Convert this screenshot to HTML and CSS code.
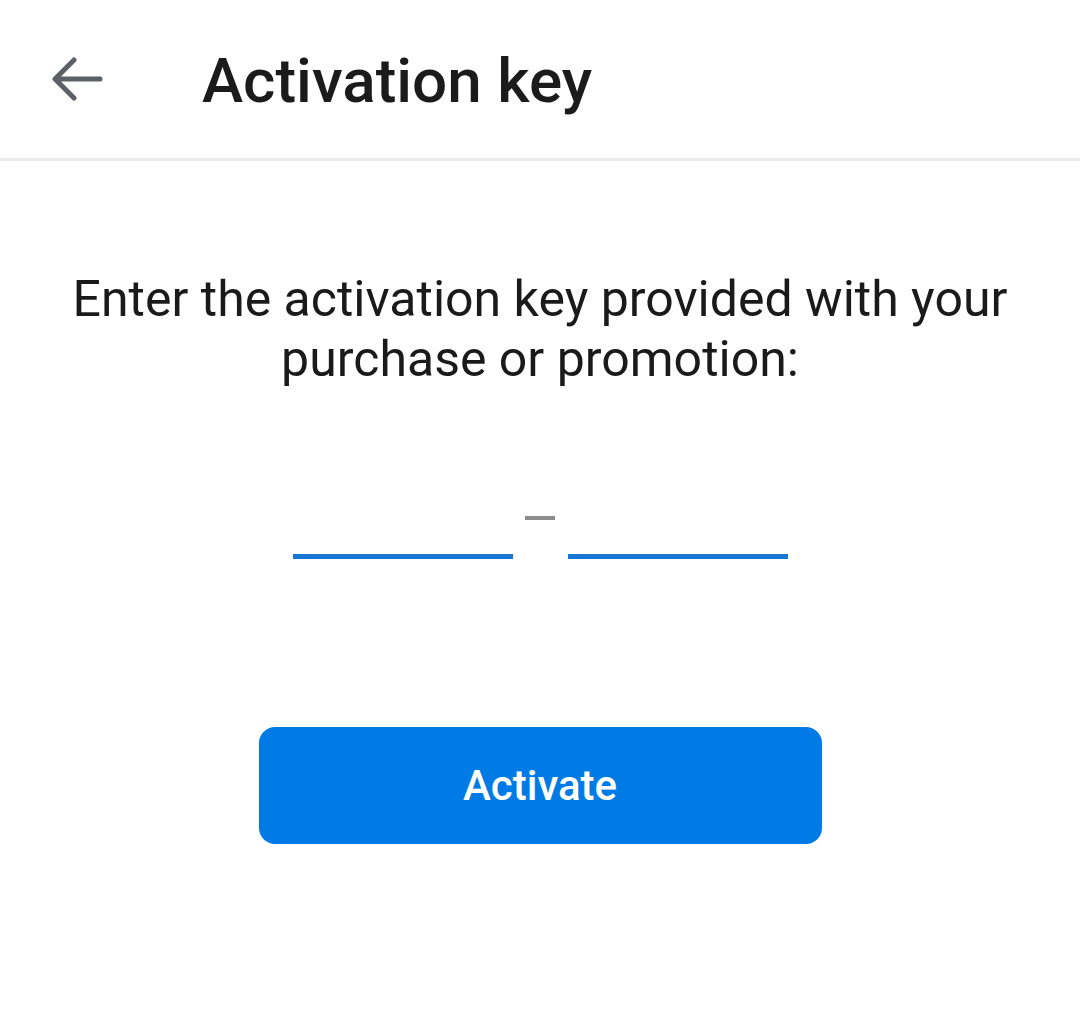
FILE: index.html
```html
<!DOCTYPE html>
<html lang="en">

<head>
  <meta charset="UTF-8" />
  <meta name="viewport" content="width=device-width, initial-scale=1.0" />
  <title>Activation key</title>
  <link rel="stylesheet" href="styles.css">
</head>

<body>

  <header class="topbar">
    <button class="back" aria-label="Back">
      <svg width="52" height="46" viewBox="0 0 52 46">
        <path d="M48 23 H4 M22 4 L3 23 L22 42" fill="none" stroke="#5b6166" stroke-width="5" stroke-linecap="round" stroke-linejoin="round" />
      </svg>
    </button>
    <h1 class="title">Activation key</h1>
  </header>

  <main class="content">
    <p class="intro">Enter the activation key provided with your purchase or promotion:</p>

    <div class="key-row">
      <input class="key-field" type="text" maxlength="4" />
      <div class="separator"><span class="dash"></span></div>
      <input class="key-field" type="text" maxlength="4" />
    </div>

    <button class="activate">Activate</button>
  </main>

</body>

</html>
```

FILE: styles.css
```css
body {
  margin: 0;
  background-color: #ffffff;
  font-family: Roboto, "Noto Sans", sans-serif;
  color: #1a1a1a;
}

.topbar {
  height: 158px;
  display: flex;
  align-items: center;
  border-bottom: 3px solid #ebebeb;
}

.back {
  margin-left: 52px;
  padding: 0;
  border: none;
  background: none;
  display: flex;
  margin-top: -1px;
}

.title {
  margin: 4px 0 0 98px;
  font-size: 62px;
  font-weight: 500;
  color: #1b1b1b;
  line-height: 1;
}

.content {
  display: flex;
  flex-direction: column;
  align-items: center;
}

.intro {
  margin: 108px 0 0;
  width: 980px;
  font-size: 50px;
  line-height: 60px;
  text-align: center;
}

.key-row {
  margin-top: 115px;
  display: flex;
  align-items: flex-end;
}

.key-field {
  width: 220px;
  height: 50px;
  padding: 0;
  border: none;
  border-bottom: 5px solid #1676d2;
  outline: none;
  background: none;
  font-family: inherit;
  font-size: 40px;
  text-align: center;
}

.separator {
  width: 55px;
  display: flex;
  justify-content: center;
  padding-bottom: 39px;
}

.dash {
  width: 30px;
  height: 4px;
  background-color: #8c8c8c;
}

.activate {
  margin-top: 168px;
  width: 563px;
  height: 117px;
  border: none;
  border-radius: 16px;
  background-color: #007be6;
  color: #ffffff;
  font-family: inherit;
  font-size: 42px;
  font-weight: 500;
}
```
